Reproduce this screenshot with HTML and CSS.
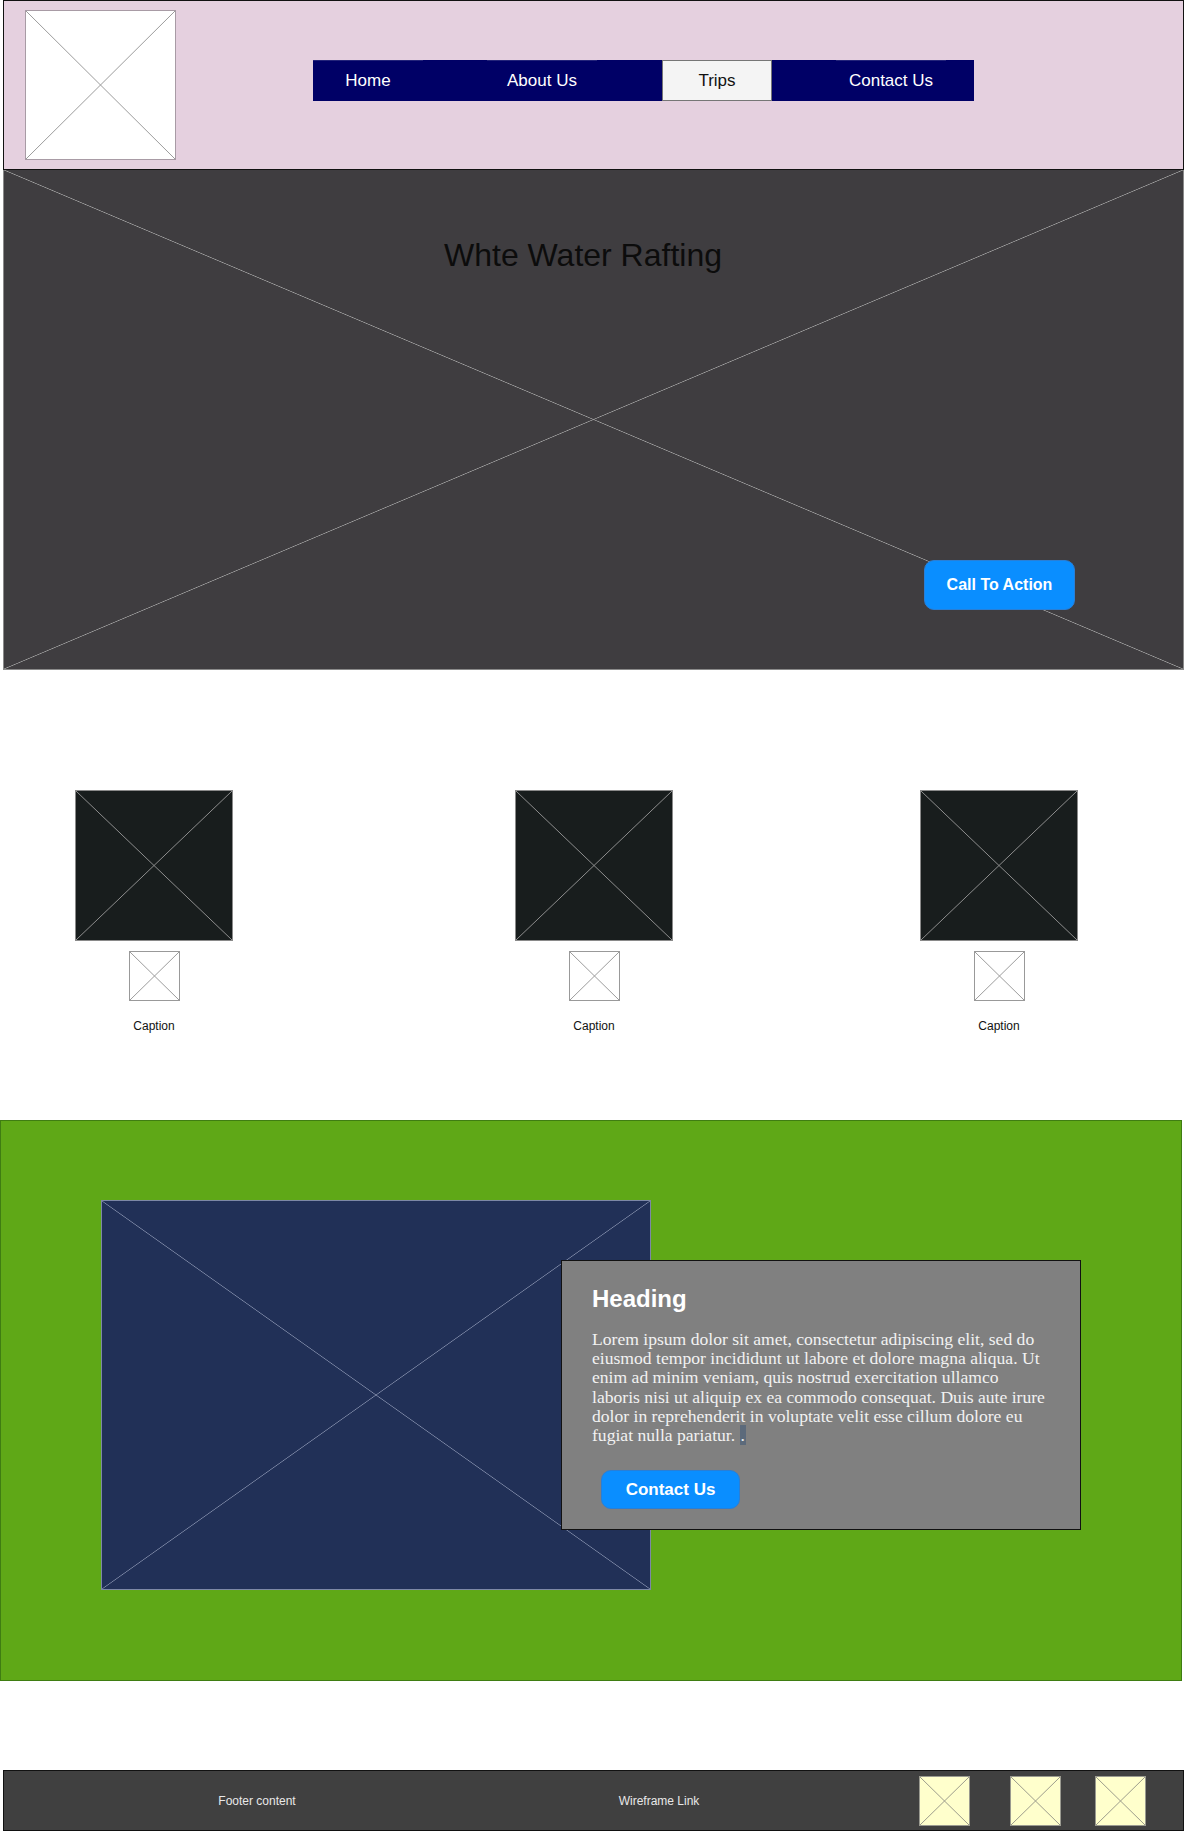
FILE: index.html
```html
<!DOCTYPE html>
<html lang="en">
<head>
<meta charset="utf-8">
<title>Whte Water Rafting</title>
<link rel="stylesheet" href="styles.css">
</head>
<body>
<header class="site-header">
  <div class="logo ph ph-light"></div>
  <nav class="nav">
    <a class="nav-item" href="#">Home</a>
    <a class="nav-item" href="#">About Us</a>
    <a class="nav-item nav-item-active" href="#">Trips</a>
    <a class="nav-item" href="#">Contact Us</a>
  </nav>
</header>

<section class="hero ph ph-hero">
  <h1 class="hero-title">Whte Water Rafting</h1>
  <a class="btn btn-cta" href="#">Call To Action</a>
</section>

<section class="cards">
  <div class="card card-1">
    <div class="card-img ph ph-dark"></div>
    <div class="card-thumb ph ph-light"></div>
    <p class="caption">Caption</p>
  </div>
  <div class="card card-2">
    <div class="card-img ph ph-dark"></div>
    <div class="card-thumb ph ph-light"></div>
    <p class="caption">Caption</p>
  </div>
  <div class="card card-3">
    <div class="card-img ph ph-dark"></div>
    <div class="card-thumb ph ph-light"></div>
    <p class="caption">Caption</p>
  </div>
</section>

<section class="feature">
  <div class="feature-img ph ph-navy"></div>
  <div class="feature-card">
    <h2 class="feature-heading">Heading</h2>
    <p class="feature-text">Lorem ipsum dolor sit amet, consectetur adipiscing elit, sed do<br>eiusmod tempor incididunt ut labore et dolore magna aliqua. Ut<br>enim ad minim veniam, quis nostrud exercitation ullamco<br>laboris nisi ut aliquip ex ea commodo consequat. Duis aute irure<br>dolor in reprehenderit in voluptate velit esse cillum dolore eu<br>fugiat nulla pariatur. <span class="mark">.</span></p>
    <a class="btn btn-contact" href="#">Contact Us</a>
  </div>
</section>

<footer class="site-footer">
  <span class="footer-text footer-text-1">Footer content</span>
  <span class="footer-text footer-text-2">Wireframe Link</span>
  <span class="footer-icon footer-icon-1 ph ph-yellow"></span>
  <span class="footer-icon footer-icon-2 ph ph-yellow"></span>
  <span class="footer-icon footer-icon-3 ph ph-yellow"></span>
</footer>
</body>
</html>
```

FILE: styles.css
```css
* {
  box-sizing: border-box;
}

body {
  margin: 0;
  background: #ffffff;
  font-family: "Liberation Sans", Arial, sans-serif;
  color: #111111;
}

/* placeholder boxes with diagonal cross */
.ph {
  --line: #8c8c8c;
  background-image:
    linear-gradient(to top right, transparent calc(50% - 0.7px), var(--line) 50%, transparent calc(50% + 0.7px)),
    linear-gradient(to bottom right, transparent calc(50% - 0.7px), var(--line) 50%, transparent calc(50% + 0.7px));
}

.ph-light {
  --line: #9a9a9a;
  background-color: #ffffff;
  border: 1px solid #999999;
}

.ph-dark {
  --line: #8f8f8f;
  background-color: #181d1d;
  border: 1px solid #8a8a8a;
}

.ph-hero {
  --line: #a0a0a0;
  background-color: #3f3d40;
}

.ph-navy {
  --line: #7d88a6;
  background-color: #213057;
  border: 1px solid #7d88a6;
}

.ph-yellow {
  --line: #9a9a8a;
  background-color: #ffffcc;
  border: 1px solid #9a9a90;
}

/* header */
.site-header {
  display: flex;
  align-items: flex-start;
  margin-left: 3px;
  width: 1181px;
  height: 170px;
  background: #e5d0df;
  border: 1px solid #111111;
}

.logo {
  width: 151px;
  height: 150px;
  margin: 9px 0 0 21px;
  border-color: #a89ba5;
}

.nav {
  display: flex;
  gap: 64px;
  margin: 59px 0 0 137px;
  padding-right: 28px;
  height: 41px;
  background: #000066;
}

.nav-item {
  display: flex;
  align-items: center;
  justify-content: center;
  width: 110px;
  height: 41px;
  border-top: 1px solid #24247a;
  color: #ffffff;
  font-size: 17px;
  text-decoration: none;
}

.nav-item:nth-child(3) {
  margin-left: 1px;
}

.nav-item-active {
  background: #f4f4f4;
  color: #111111;
  border: 1px solid #767676;
}

/* hero */
.hero {
  display: flex;
  flex-direction: column;
  margin-left: 3px;
  width: 1181px;
  height: 500px;
  border: 1px solid #8a8a8a;
  border-top: none;
}

.hero-title {
  margin: 0;
  padding: 67px 21px 0 0;
  font-size: 32px;
  font-weight: normal;
  line-height: 36px;
  text-align: center;
  color: #0c0c0c;
}

.btn {
  display: flex;
  align-items: center;
  justify-content: center;
  background: #0a8eff;
  color: #ffffff;
  font-weight: bold;
  text-decoration: none;
  border: 1px solid #2a7fd6;
}

.btn-cta {
  align-self: flex-end;
  margin: auto 108px 59px 0;
  width: 151px;
  height: 50px;
  border-radius: 10px;
  font-size: 16px;
}

/* cards */
.cards {
  display: flex;
  align-items: flex-start;
  height: 450px;
  padding: 120px 0 0 75px;
}

.card {
  display: flex;
  flex-direction: column;
  align-items: center;
  width: 158px;
}

.card-2 {
  margin-left: 282px;
}

.card-3 {
  margin-left: 247px;
}

.card-img {
  width: 158px;
  height: 151px;
}

.card-thumb {
  width: 51px;
  height: 50px;
  margin-top: 10px;
}

.caption {
  margin: 18px 0 0;
  font-size: 12px;
  line-height: 14px;
  color: #111111;
}

/* feature */
.feature {
  display: flex;
  align-items: flex-start;
  width: 1182px;
  height: 561px;
  padding-top: 79px;
  background: #5fa817;
  border: 1px solid #3f7d12;
}

.feature-img {
  flex: none;
  width: 550px;
  height: 390px;
  margin-left: 100px;
}

.feature-card {
  position: relative;
  flex: none;
  display: flex;
  flex-direction: column;
  align-items: flex-start;
  width: 520px;
  height: 270px;
  margin: 60px 0 0 -90px;
  padding: 24px 30px 0;
  background: #808080;
  border: 1px solid #111111;
}

.feature-heading {
  margin: 0;
  font-size: 24px;
  line-height: 28px;
  font-weight: bold;
  color: #ffffff;
}

.feature-text {
  margin: 17px 0 0;
  font-family: "Liberation Serif", "Times New Roman", serif;
  font-size: 17.6px;
  line-height: 19.2px;
  color: #f2f2f2;
  white-space: nowrap;
}

.mark {
  background: #5c6a7b;
  padding: 0 1px;
}

.btn-contact {
  margin: 25px 0 0 9px;
  width: 139px;
  height: 39px;
  border-radius: 10px;
  font-size: 17px;
}

/* footer */
.site-footer {
  display: flex;
  align-items: center;
  margin: 89px 0 0 3px;
  width: 1181px;
  height: 61px;
  background: #404040;
  border: 1px solid #111111;
}

.footer-text {
  width: 160px;
  text-align: center;
  font-size: 12px;
  color: #e8e8e8;
}

.footer-text-1 {
  margin-left: 173px;
}

.footer-text-2 {
  margin-left: 242px;
}

.footer-icon {
  display: block;
  width: 51px;
  height: 50px;
}

.footer-icon-1 {
  margin-left: 180px;
}

.footer-icon-2 {
  margin-left: 40px;
}

.footer-icon-3 {
  margin-left: 34px;
}
```
